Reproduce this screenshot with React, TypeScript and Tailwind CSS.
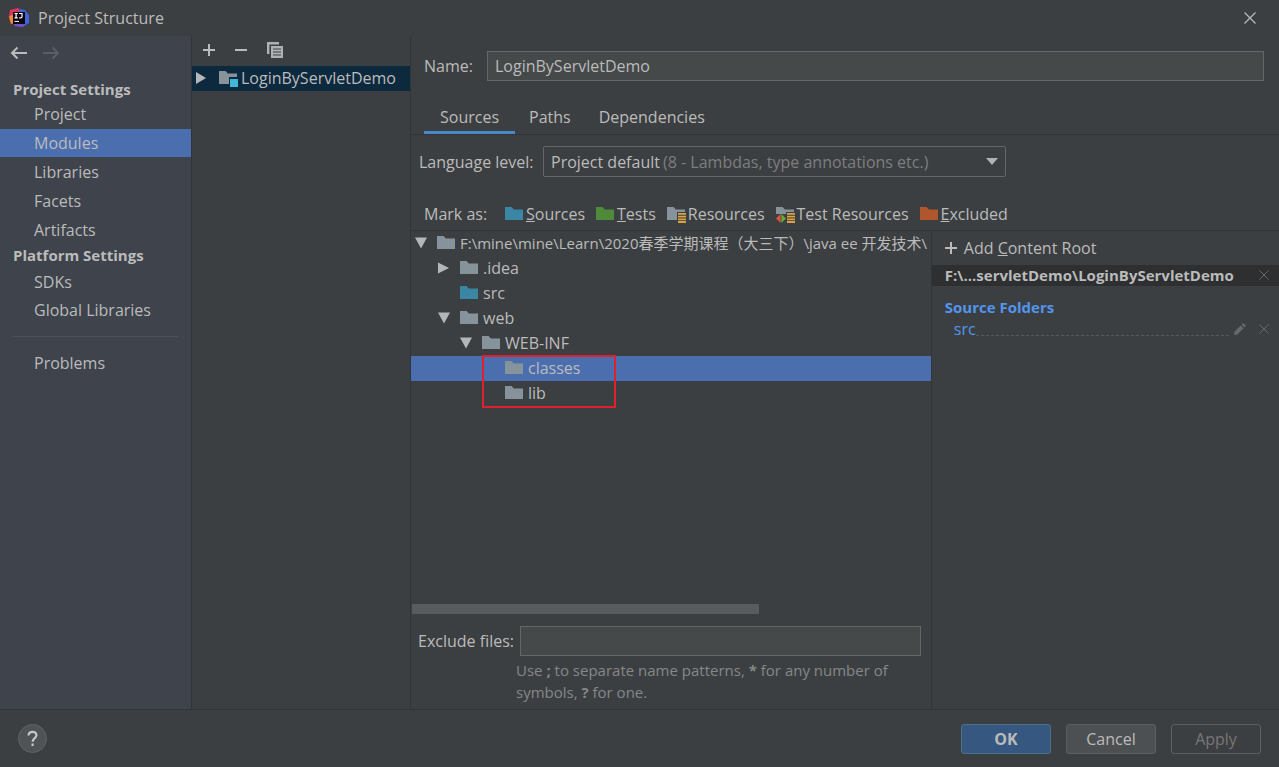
import { useState, type ReactNode } from "react";

function Folder({ className, children }: { className: string; children?: ReactNode }) {
  return (
    <svg viewBox="0 0 20 18" className="h-[18px] w-5 shrink-0" aria-hidden="true">
      <path d="M0 2h6.6l2.2 2.6H18V15H0z" className={className} />
      {children}
    </svg>
  );
}

function ResourceLines() {
  return (
    <>
      <path d="M10 7h10v11H10z" className="fill-[#3c3f41]" />
      <path d="M11 8h8v1.8h-8zM11 10.7h8v1.8h-8zM11 13.4h8v1.8h-8zM11 16.1h8v1.8h-8z" className="fill-[#d9a343]" />
    </>
  );
}

function Arrow({ open }: { open: boolean }) {
  return (
    <svg viewBox="0 0 12 12" className="h-3 w-3" aria-hidden="true">
      <path d={open ? "M0 .5h12L6 11.5z" : "M0 .5l11 5.5L0 11.5z"} className="fill-[#b4b6b8]" />
    </svg>
  );
}

function Cross({ className }: { className: string }) {
  return (
    <svg viewBox="0 0 12 12" className={className} fill="none" stroke="currentColor" strokeWidth="1.2" aria-hidden="true">
      <path d="M.5.5l11 11M11.5.5l-11 11" />
    </svg>
  );
}

function Plus() {
  return (
    <svg viewBox="0 0 12 12" className="h-3 w-3" fill="none" stroke="currentColor" strokeWidth="2" aria-hidden="true">
      <path d="M6 0v12M0 6h12" />
    </svg>
  );
}

function Logo() {
  return (
    <svg viewBox="0 0 20 20" className="h-5 w-5" aria-hidden="true">
      <path d="M1 2l8-2 5 4-9 12-4-2-1-5z" fill="#e0345f" />
      <path d="M0 8l4-1 3 8-5 1z" fill="#f28a35" />
      <path d="M11 1l5 1 4 5v8l-6 4-8-1-2-4z" fill="#3f63d8" />
      <path d="M5 16l6-1 5 2-4 2-6-1z" fill="#7a4fc4" />
      <path d="M4 4h12v12H4z" fill="#0b0712" />
      <path d="M5.5 5.5h3.3M7.1 5.5v4.3M5.5 9.8h3.3M10 5.5h3v3.2c0 1-1 1.3-2.8 1.1" stroke="#fff" strokeWidth="1.2" fill="none" />
      <path d="M5.5 13.4h4.5" stroke="#fff" strokeWidth="1" />
    </svg>
  );
}

const gray = "fill-[#87939a]";
const blue = "fill-[#3a86a4]";

function NavItem({ label, active, onSelect }: { label: string; active: boolean; onSelect: (l: string) => void }) {
  return (
    <button
      type="button"
      onClick={() => onSelect(label)}
      className={`flex h-7 w-full items-center pl-[34px] text-left ${active ? "bg-[#4b6eaf]" : ""}`}
    >
      {label}
    </button>
  );
}

const levels = ["pl-1", "pl-[27px]", "pl-[49px]", "pl-[72px]"];

function TreeRow({ level, label, arrow, fill = gray, selected = false }: {
  level: number;
  label: string;
  arrow?: "open" | "closed";
  fill?: string;
  selected?: boolean;
}) {
  return (
    <div className={`flex h-[25px] items-center pb-px ${levels[level]} ${level === 0 ? "text-[15px]" : ""} ${selected ? "bg-[#4b6eaf]" : ""}`}>
      <span className="mr-[10px] w-3 shrink-0">{arrow && <Arrow open={arrow === "open"} />}</span>
      <Folder className={fill} />
      <span className="ml-[3px] whitespace-nowrap">{label}</span>
    </div>
  );
}

export default function App() {
  const [page, setPage] = useState("Modules");
  const [tab, setTab] = useState("Sources");
  const nav = (label: string) => <NavItem key={label} label={label} active={page === label} onSelect={setPage} />;

  return (
    <div className="flex min-h-screen flex-col bg-[#3c3f41] font-['Open_Sans','Noto_Sans_CJK_SC',sans-serif] text-base leading-[22px] text-[#bbbbbb]">
      <header className="flex h-9 items-center pl-[9px] pr-[23px]">
        <Logo />
        <h1 className="ml-[9px] flex-1">Project Structure</h1>
        <button type="button" aria-label="Close">
          <Cross className="h-3 w-3" />
        </button>
      </header>

      <div className="flex flex-1">
        <nav className="w-48 shrink-0 border-r border-[#323537] bg-[#3e434c]">
          <div className="flex h-[34px] items-center gap-4 pl-[10px]">
            <button type="button" aria-label="Back">
              <svg viewBox="0 0 17 14" className="h-[14px] w-[17px]" fill="none" stroke="currentColor" strokeWidth="2" aria-hidden="true">
                <path d="M17 7H2M7.5 1.5L2 7l5.5 5.5" />
              </svg>
            </button>
            <button type="button" aria-label="Forward" disabled className="text-[#5a5e66]">
              <svg viewBox="0 0 17 14" className="h-[14px] w-[17px]" fill="none" stroke="currentColor" strokeWidth="2" aria-hidden="true">
                <path d="M0 7h15M9.5 1.5L15 7l-5.5 5.5" />
              </svg>
            </button>
          </div>
          <h2 className="mt-2 pl-[13px] text-[15px] font-bold">Project Settings</h2>
          <div className="flex flex-col gap-px">
            {["Project", "Modules", "Libraries", "Facets", "Artifacts"].map(nav)}
          </div>
          <h2 className="pl-[13px] text-[15px] font-bold">Platform Settings</h2>
          <div className="mt-[2px] flex flex-col">{["SDKs", "Global Libraries"].map(nav)}</div>
          <hr className="mx-[13px] mb-3 mt-3 border-[#4b4f57]" />
          {nav("Problems")}
        </nav>

        <aside className="w-[219px] shrink-0 border-r border-[#323537]">
          <div className="flex h-[30px] items-center pb-[2px] pl-[11px]">
            <button type="button" aria-label="Add">
              <Plus />
            </button>
            <button type="button" aria-label="Remove" className="ml-5">
              <svg viewBox="0 0 12 12" className="h-3 w-3" stroke="currentColor" strokeWidth="2" aria-hidden="true">
                <path d="M0 6h12" />
              </svg>
            </button>
            <button type="button" aria-label="Copy" className="ml-5">
              <svg viewBox="0 0 16 16" className="h-4 w-4" aria-hidden="true">
                <path d="M0 0h12v2.4H2.4V12H0z" fill="#afb1b3" />
                <path d="M4 4h12v12H4z" fill="#afb1b3" />
                <path d="M6 7h8M6 10h8M6 13h8" stroke="#3c3f41" strokeWidth="1.2" />
              </svg>
            </button>
          </div>
          <div className="flex h-[25px] items-center bg-[#0d293e] pb-px pl-1">
            <svg viewBox="0 0 10 12" className="h-3 w-[10px]" aria-hidden="true">
              <path d="M0 0l10 6-10 6z" className="fill-[#b4b6b8]" />
            </svg>
            <span className="ml-[13px]">
              <Folder className={gray}>
                <path d="M10 8h9v10h-9z" className="fill-[#0d293e]" />
                <path d="M11 10h8v8h-8z" className="fill-[#40b6d8]" />
              </Folder>
            </span>
            <span className="ml-[2px]">LoginByServletDemo</span>
          </div>
        </aside>

        <main className="flex min-w-0 flex-1 flex-col">
          <div className="mt-[15px] flex items-center pl-[13px] pr-[15px]">
            <label htmlFor="module-name" className="w-[63px] shrink-0">Name:</label>
            <input
              id="module-name"
              defaultValue="LoginByServletDemo"
              className="h-[30px] min-w-0 flex-1 border border-[#646769] bg-[#45494a] px-[7px] outline-none"
            />
          </div>

          <div role="tablist" className="mt-[19px] flex h-[35px] border-b border-[#323537] pl-[13px]">
            {["Sources", "Paths", "Dependencies"].map((t, i) => (
              <button
                key={t}
                role="tab"
                type="button"
                aria-selected={tab === t}
                onClick={() => setTab(t)}
                className={`border-b-[3px] pt-[2px] ${i === 0 ? "px-4" : "px-[14px]"} ${tab === t ? "border-[#4a88c7]" : "border-transparent"}`}
              >
                {t}
              </button>
            ))}
          </div>

          <div className="mt-[11px] flex items-center pl-2">
            <label htmlFor="level" className="w-[124px] shrink-0">Language level:</label>
            <div className="grid w-[463px] items-center">
              <select
                id="level"
                className="col-start-1 row-start-1 h-[31px] w-full appearance-none rounded-[2px] border border-[#646769] bg-[#3c3f41] pl-[7px] outline-none"
              >
                <option>Project default</option>
              </select>
              <span className="pointer-events-none col-start-1 row-start-1 flex items-center justify-between pl-[120px] pr-2 text-[#7c7e80]">
                (8 - Lambdas, type annotations etc.)
                <svg viewBox="0 0 12 7" className="h-[7px] w-3" aria-hidden="true">
                  <path d="M0 0h12L6 7z" className="fill-[#afb1b3]" />
                </svg>
              </span>
            </div>
          </div>

          <div className="mt-[21px] flex h-8 items-center pl-[13px]">
            <span className="w-[81px] shrink-0">Mark as:</span>
            <div className="flex gap-[11px] whitespace-nowrap">
              <button type="button" className="flex items-center gap-px">
                <Folder className={blue} />
                <span><u>S</u>ources</span>
              </button>
              <button type="button" className="flex items-center gap-px">
                <Folder className="fill-[#4f8a3a]" />
                <span><u>T</u>ests</span>
              </button>
              <button type="button" className="flex items-center gap-px">
                <Folder className={gray}><ResourceLines /></Folder>
                <span>Resources</span>
              </button>
              <button type="button" className="flex items-center gap-px">
                <Folder className={gray}>
                  <ResourceLines />
                  <path d="M0 9h10v9H0z" className="fill-[#3c3f41]" />
                  <path d="M4.6 9v9L0 13.5z" fill="#e05238" />
                  <path d="M5.4 9v9l4.6-4.5z" fill="#5fae3c" />
                </Folder>
                <span>Test Resources</span>
              </button>
              <button type="button" className="flex items-center gap-px">
                <Folder className="fill-[#b0562c]" />
                <span><u>E</u>xcluded</span>
              </button>
            </div>
          </div>

          <div className="grid flex-1 grid-cols-[3fr_2fr] border-t border-[#323537]">
            <section className="flex min-w-0 flex-col border-r border-[#323537]">
              <div className="flex-1 overflow-hidden">
                <TreeRow level={0} arrow="open" label="F:\mine\mine\Learn\2020春季学期课程（大三下）\java ee 开发技术\" />
                <TreeRow level={1} arrow="closed" label=".idea" />
                <TreeRow level={1} fill={blue} label="src" />
                <TreeRow level={1} arrow="open" label="web" />
                <TreeRow level={2} arrow="open" label="WEB-INF" />
                <div className="relative">
                  <TreeRow level={3} selected label="classes" />
                  <TreeRow level={3} label="lib" />
                  <div className="pointer-events-none absolute -bottom-0.5 -top-px left-[71px] w-[134px] border-2 border-[#e0202c]" />
                </div>
              </div>
              <div className="mx-px h-[10px] w-2/3 bg-[#595c5e]" />
              <div className="mt-3 flex items-center pl-[7px] pr-[10px]">
                <label htmlFor="exclude" className="w-[102px] shrink-0">Exclude files:</label>
                <input id="exclude" className="h-[30px] min-w-0 flex-1 border border-[#646769] bg-[#45494a] px-[7px] outline-none" />
              </div>
              <p className="mb-[6px] mt-[3px] pl-[105px] pr-3 text-[15px] text-[#858789]">
                Use <b>;</b> to separate name patterns, <b>*</b> for any number of symbols, <b>?</b> for one.
              </p>
            </section>

            <section className="min-w-0">
              <button type="button" className="flex h-[34px] items-center gap-[7px] pl-[13px]">
                <Plus />
                <span>Add <u>C</u>ontent Root</span>
              </button>
              <div className="flex h-[21px] items-center bg-[#2d2f30] pb-px pl-[13px] pr-[10px]">
                <span className="min-w-0 flex-1 truncate text-[15px] font-bold">F:\...servletDemo\LoginByServletDemo</span>
                <button type="button" aria-label="Remove content root" className="text-[#66696b]">
                  <Cross className="h-[10px] w-[10px]" />
                </button>
              </div>
              <h3 className="mt-[10px] pl-[13px] text-[15px] font-bold text-[#5394ec]">Source Folders</h3>
              <div className="flex h-[22px] items-center pl-[22px] pr-[10px] text-[#66696b]">
                <a href="#src" className="text-[#5394ec]">src</a>
                <span className="mr-[5px] mt-3 flex-1 border-b border-dashed border-[#56595b]" />
                <button type="button" aria-label="Edit">
                  <svg viewBox="0 0 12 12" className="h-3 w-3" fill="currentColor" aria-hidden="true">
                    <path d="M0 12l.6-3.4 6.2-6.2 2.8 2.8-6.2 6.2zM7.6 1.6L9.2 0 12 2.8l-1.6 1.6z" />
                  </svg>
                </button>
                <button type="button" aria-label="Remove src" className="ml-[13px]">
                  <Cross className="h-[10px] w-[10px]" />
                </button>
              </div>
            </section>
          </div>
        </main>
      </div>

      <footer className="flex h-[58px] items-center justify-between border-t border-[#323537] pl-[18px] pr-[18px]">
        <button type="button" aria-label="Help" className="h-[29px] w-[29px] rounded-full border border-[#606365] bg-[#505355]">
          <svg viewBox="0 0 27 27" className="h-[27px] w-[27px]" fill="none" stroke="#c4c6c8" strokeWidth="2.2" aria-hidden="true">
            <path d="M9.6 10.6c0-2.4 1.6-3.8 3.9-3.8s3.9 1.4 3.9 3.5c0 3.2-3.8 3-3.8 6.4M13.6 18.6v2.4" />
          </svg>
        </button>
        <div className="flex gap-[15px]">
          <button type="button" className="h-[30px] w-[90px] rounded-[3px] border border-[#4c708c] bg-[#365880] font-bold">OK</button>
          <button type="button" className="h-[30px] w-[90px] rounded-[3px] border border-[#5e6060] bg-[#4c5052]">Cancel</button>
          <button type="button" disabled className="h-[30px] w-[90px] rounded-[3px] border border-[#5e6060] text-[#777777]">Apply</button>
        </div>
      </footer>
    </div>
  );
}
